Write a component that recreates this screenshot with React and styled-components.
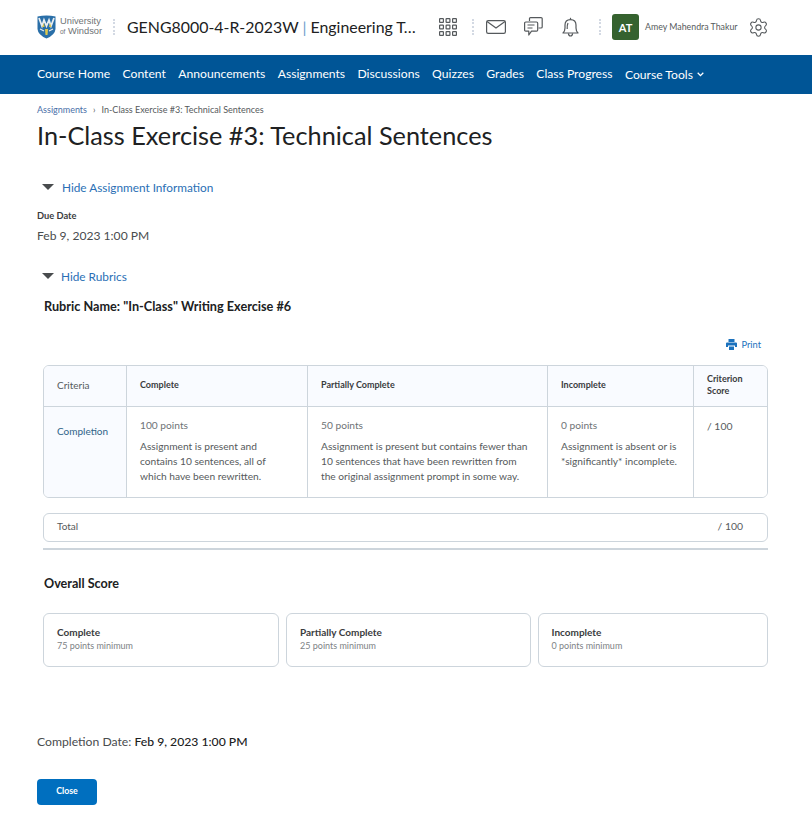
import React from 'react';
import styled, { createGlobalStyle } from 'styled-components';
import { Settings } from 'lucide-react';

const GlobalStyle = createGlobalStyle`
  html, body {
    margin: 0;
    padding: 0;
    background: #fff;
    font-family: Lato, "Open Sans", sans-serif;
    color: #202122;
  }
  * { box-sizing: border-box; }
`;

const Page = styled.div`
  width: 812px;
  height: 840px;
  overflow: hidden;
`;

const Header = styled.header`
  height: 55px;
  display: flex;
  align-items: center;
  padding: 0 0 1px 37px;
`;

const LogoText = styled.div`
  margin: 0 0 1px 4px;
  width: 40px;
  font-family: "Liberation Sans", sans-serif;
  font-size: 9.3px;
  line-height: 10px;
  color: #6e7376;
  text-align: right;
  white-space: nowrap;
`;

const LogoOf = styled.span`
  font-size: 6.5px;
`;

const Dots = styled.span`
  display: block;
  height: 16px;
  border-left: 2px dotted #d3d9e3;
  margin: ${(p) => p.$margin};
`;

const CourseTitle = styled.div`
  width: 295px;
  margin-bottom: 2px;
  font-size: 15.9px;
  color: #202122;
  white-space: nowrap;
  overflow: hidden;
  text-overflow: ellipsis;
`;

const Pipe = styled.span`
  color: #6d9ecb;
`;

const IconSlot = styled.span`
  display: flex;
  color: #55595c;
  margin: ${(p) => p.$margin || 0};
`;

const Avatar = styled.div`
  width: 27px;
  height: 26px;
  border-radius: 3px;
  background: #35622f;
  color: #fff;
  font-size: 11px;
  font-weight: 700;
  display: flex;
  align-items: center;
  justify-content: center;
`;

const UserName = styled.div`
  margin: 0 0 2px 6px;
  width: 98px;
  font-size: 8.8px;
  color: #565a5c;
  white-space: nowrap;
`;

const Nav = styled.nav`
  height: 39px;
  background: #005596;
  display: flex;
  align-items: center;
  gap: 12.4px;
  padding: 0 0 3px 37px;
  color: #fff;
  font-size: 12.15px;
`;

const NavItem = styled.span`
  white-space: nowrap;
`;

const NavMenu = styled(NavItem)`
  display: flex;
  align-items: center;
  gap: 4px;
  margin-top: 2px;
`;

const Main = styled.main`
  padding: 0 44px 0 37px;
`;

const Crumbs = styled.div`
  padding-top: 10px;
  height: 24px;
  display: flex;
  gap: 6px;
  font-size: 9px;
  line-height: 12px;
  color: #565a5c;
`;

const CrumbLink = styled.span`
  color: #4a6fa8;
`;

const Title = styled.h1`
  margin: 0;
  height: 39px;
  font-size: 25.3px;
  line-height: 34px;
  font-weight: 400;
  color: #202122;
`;

const Toggle = styled.div`
  display: flex;
  align-items: center;
  height: 16px;
  margin-top: ${(p) => p.$top}px;
  padding-left: 5px;
  gap: ${(p) => p.$gap}px;
  font-size: 11.8px;
  color: #2a6fb5;
`;

const Caret = styled.span`
  width: 0;
  height: 0;
  border-left: 6px solid transparent;
  border-right: 6px solid transparent;
  border-top: 6px solid #494c4e;
`;

const DueLabel = styled.div`
  margin-top: 15px;
  height: 12px;
  font-size: 9.3px;
  line-height: 12px;
  font-weight: 700;
  color: #3a3c3e;
`;

const DueValue = styled.div`
  margin-top: 6px;
  font-size: 12.1px;
  line-height: 16px;
  color: #494c4e;
`;

const RubricSection = styled.section`
  margin-left: 6px;
`;

const RubricName = styled.h2`
  margin: 14px 0 0 1px;
  font-size: 12.7px;
  line-height: 16px;
  font-weight: 700;
  color: #202122;
`;

const PrintRow = styled.div`
  margin-top: 22px;
  height: 16px;
  display: flex;
  justify-content: flex-end;
  align-items: center;
  gap: 4px;
  padding-right: 7px;
  font-size: 9.3px;
  color: #1c72bd;
`;

const Table = styled.div`
  margin-top: 13px;
  width: 725px;
  height: 133px;
  display: grid;
  grid-template-columns: 82px 181px 240px 146px 74px;
  grid-template-rows: 40px 91px;
  border: 1px solid #cdd5dc;
  border-radius: 6px;
  overflow: hidden;
`;

const Cell = styled.div`
  background: ${(p) => (p.$shaded ? '#f9fbff' : '#fff')};
  border-left: ${(p) => (p.$first ? 'none' : '1px solid #cdd5dc')};
  border-top: ${(p) => (p.$body ? '1px solid #cdd5dc' : 'none')};
  padding: ${(p) => (p.$body ? '0 0 0 13px' : '0 0 3px 13px')};
  display: flex;
  flex-direction: column;
  justify-content: ${(p) => (p.$body ? 'flex-start' : 'center')};
`;

const CriteriaText = styled.div`
  font-size: 10px;
  color: ${(p) => p.$color || '#565a5c'};
  margin-top: ${(p) => p.$top || 0}px;
`;

const LevelHead = styled.div`
  font-size: 9px;
  line-height: 12px;
  font-weight: 700;
  color: #3a3c3e;
`;

const Points = styled.div`
  margin-top: 12px;
  font-size: 10.2px;
  line-height: 12px;
  color: #6e7376;
`;

const Description = styled.div`
  margin-top: 8px;
  font-size: 10.2px;
  line-height: 15px;
  color: #565a5c;
  white-space: pre-line;
`;

const Score = styled.div`
  margin-top: 13px;
  font-size: 10.4px;
  line-height: 12px;
  color: #565a5c;
`;

const TotalBox = styled.div`
  margin-top: 15px;
  width: 725px;
  height: 29px;
  border: 1px solid #cdd5dc;
  border-radius: 6px;
  display: flex;
  align-items: center;
  justify-content: space-between;
  padding: 0 24px 3px 13px;
  font-size: 10px;
  color: #565a5c;
`;

const TotalScore = styled.span`
  font-size: 10.4px;
`;

const Rule = styled.div`
  margin-top: 6px;
  width: 725px;
  height: 2px;
  background: #cdd5dc;
`;

const ScoreHeading = styled.h3`
  margin: 26px 0 0 1px;
  font-size: 12.6px;
  line-height: 16px;
  font-weight: 700;
  color: #202122;
`;

const Levels = styled.div`
  margin-top: 21px;
  width: 725px;
  display: grid;
  grid-template-columns: 236px 244.5px 230.5px;
  column-gap: 7px;
`;

const LevelCard = styled.div`
  height: 54px;
  border: 1px solid #cdd5dc;
  border-radius: 6px;
  padding: 12px 13px 0;
`;

const LevelName = styled.div`
  font-size: 10px;
  line-height: 13px;
  font-weight: 700;
  color: #3a3c3e;
`;

const LevelMin = styled.div`
  font-size: 9px;
  line-height: 14px;
  color: #7d8285;
`;

const CompletionDate = styled.div`
  margin-top: 67px;
  font-size: 12.2px;
  line-height: 16px;
  color: #494c4e;
`;

const DateValue = styled.span`
  color: #202122;
  font-weight: 500;
`;

const CloseButton = styled.button`
  display: block;
  margin-top: 29px;
  width: 60px;
  height: 26px;
  border: none;
  border-radius: 4px;
  background: #006fbf;
  color: #fff;
  font-family: inherit;
  font-size: 8.8px;
  font-weight: 700;
  padding: 0 0 4px;
`;

const ShieldLogo = () => (
  <svg width="19" height="24" viewBox="0 0 19 24">
    <path d="M0.5 1.5 Q9.5 -0.5 18.5 1.5 V14 Q18 20 9.5 23.5 Q1 20 0.5 14 Z" fill="#2a6fa8" />
    <path d="M2 3 L5 11 L7 5 L9.5 11 L12 5 L14 11 L17 3" fill="none" stroke="#e8edf0" strokeWidth="1.8" />
    <path d="M5 12 L7 8 L7.5 12 Z M12 12 L13 8 L14.5 12 Z" fill="#e0c84a" />
    <path d="M8 14 L11 14 L10.5 20 L8.5 20 Z" fill="#e0c84a" />
    <path d="M3 14 L7 16 M16 14 L12 16" stroke="#e8edf0" strokeWidth="1.2" />
  </svg>
);

const GridIcon = () => (
  <svg width="18" height="18" viewBox="0 0 18 18" fill="none" stroke="#55595c" strokeWidth="1.2">
    {[0, 6.5, 13].map((y) =>
      [0, 6.5, 13].map((x) => <rect key={`${x}-${y}`} x={x + 0.6} y={y + 0.6} width="3.8" height="3.8" rx="0.5" />)
    )}
  </svg>
);

const MailIcon = () => (
  <svg width="20" height="14" viewBox="0 0 20 14" fill="none" stroke="#55595c" strokeWidth="1.2">
    <rect x="0.6" y="0.6" width="18.8" height="12.8" rx="1.6" />
    <path d="M1 1.5 L10 8 L19 1.5" />
  </svg>
);

const ChatIcon = () => (
  <svg width="19" height="20" viewBox="0 0 19 20" fill="none" stroke="#55595c" strokeWidth="1.2" strokeLinejoin="round">
    <path d="M5.5 4 V1.6 Q5.5 0.6 6.5 0.6 H17 Q18.2 0.6 18.2 1.6 V10 Q18.2 11 17 11 H14.5" />
    <path d="M1.8 5 H12.5 Q13.7 5 13.7 6.2 V13 Q13.7 14.2 12.5 14.2 H7.5 L4.8 18 V14.2 H1.8 Q0.6 14.2 0.6 13 V6.2 Q0.6 5 1.8 5 Z" />
    <path d="M3.5 8 H10.5 M3.5 11 H8.5" />
  </svg>
);

const BellIcon = () => (
  <svg width="17" height="20" viewBox="0 0 17 20" fill="none" stroke="#55595c" strokeWidth="1.2" strokeLinejoin="round">
    <path d="M8.5 0.8 V2.4" />
    <path d="M1 16 Q3 14 3 11 V8 Q3 2.6 8.5 2.6 Q14 2.6 14 8 V11 Q14 14 16 16 Z" />
    <path d="M6.4 16.4 Q6.6 19 8.5 19 Q10.4 19 10.6 16.4" />
    <path d="M6 6 Q5 8 5.2 12" />
  </svg>
);

const PrintIcon = () => (
  <svg width="11" height="11" viewBox="0 0 11 11" fill="#1c72bd">
    <path d="M2.5 0 H8.5 V3 H2.5 Z" />
    <path d="M1 3.5 H10 Q11 3.5 11 4.5 V8 H9 V6.5 H2 V8 H0 V4.5 Q0 3.5 1 3.5 Z" />
    <path d="M3 7.5 H8 V11 H3 Z" />
  </svg>
);

const ChevronDown = () => (
  <svg width="7" height="5" viewBox="0 0 7 5" fill="none" stroke="#fff" strokeWidth="1.3">
    <path d="M0.7 0.8 L3.5 3.6 L6.3 0.8" />
  </svg>
);

const navItems = ['Course Home', 'Content', 'Announcements', 'Assignments', 'Discussions', 'Quizzes', 'Grades', 'Class Progress'];

const levels = [
  {
    name: 'Complete',
    points: '100 points',
    description: 'Assignment is present and\ncontains 10 sentences, all of\nwhich have been rewritten.',
  },
  {
    name: 'Partially Complete',
    points: '50 points',
    description: 'Assignment is present but contains fewer than\n10 sentences that have been rewritten from\nthe original assignment prompt in some way.',
  },
  {
    name: 'Incomplete',
    points: '0 points',
    description: 'Assignment is absent or is\n*significantly* incomplete.',
  },
];

const overall = [
  { name: 'Complete', min: '75 points minimum' },
  { name: 'Partially Complete', min: '25 points minimum' },
  { name: 'Incomplete', min: '0 points minimum' },
];

const App = () => (
  <Page>
    <GlobalStyle />
    <Header>
      <ShieldLogo />
      <LogoText>
        University
        <br />
        <LogoOf>of</LogoOf> Windsor
      </LogoText>
      <Dots $margin="0 12px 0 13px" />
      <CourseTitle>
        GENG8000-4-R-2023W <Pipe>|</Pipe> Engineering Technical Communication
      </CourseTitle>
      <IconSlot $margin="0 0 0 17px">
        <GridIcon />
      </IconSlot>
      <Dots $margin="0 12px 0 15px" />
      <MailIcon />
      <IconSlot $margin="0 0 0 18px">
        <ChatIcon />
      </IconSlot>
      <IconSlot $margin="0 0 0 19px">
        <BellIcon />
      </IconSlot>
      <Dots $margin="0 11px 0 20px" />
      <Avatar>AT</Avatar>
      <UserName>Amey Mahendra Thakur</UserName>
      <IconSlot $margin="0 0 0 5px">
        <Settings size={21} strokeWidth={1.2} />
      </IconSlot>
    </Header>
    <Nav>
      {navItems.map((item) => (
        <NavItem key={item}>{item}</NavItem>
      ))}
      <NavMenu>
        Course Tools <ChevronDown />
      </NavMenu>
    </Nav>
    <Main>
      <Crumbs>
        <CrumbLink>Assignments</CrumbLink>
        <span>›</span>
        <span>In-Class Exercise #3: Technical Sentences</span>
      </Crumbs>
      <Title>In-Class Exercise #3: Technical Sentences</Title>
      <Toggle $top={22} $gap={8}>
        <Caret />
        Hide Assignment Information
      </Toggle>
      <DueLabel>Due Date</DueLabel>
      <DueValue>Feb 9, 2023 1:00 PM</DueValue>
      <Toggle $top={24} $gap={7}>
        <Caret />
        Hide Rubrics
      </Toggle>
      <RubricSection>
        <RubricName>Rubric Name: "In-Class" Writing Exercise #6</RubricName>
        <PrintRow>
          <PrintIcon />
          Print
        </PrintRow>
        <Table>
          <Cell $first $shaded>
            <CriteriaText>Criteria</CriteriaText>
          </Cell>
          {levels.map((level) => (
            <Cell key={level.name} $shaded>
              <LevelHead>{level.name}</LevelHead>
            </Cell>
          ))}
          <Cell $shaded>
            <LevelHead>
              Criterion
              <br />
              Score
            </LevelHead>
          </Cell>
          <Cell $first $shaded $body>
            <CriteriaText $top={18} $color="#2f6488">Completion</CriteriaText>
          </Cell>
          {levels.map((level) => (
            <Cell key={level.name} $body>
              <Points>{level.points}</Points>
              <Description>{level.description}</Description>
            </Cell>
          ))}
          <Cell $body>
            <Score>/ 100</Score>
          </Cell>
        </Table>
        <TotalBox>
          <span>Total</span>
          <TotalScore>/ 100</TotalScore>
        </TotalBox>
        <Rule />
        <ScoreHeading>Overall Score</ScoreHeading>
        <Levels>
          {overall.map((level) => (
            <LevelCard key={level.name}>
              <LevelName>{level.name}</LevelName>
              <LevelMin>{level.min}</LevelMin>
            </LevelCard>
          ))}
        </Levels>
      </RubricSection>
      <CompletionDate>
        Completion Date: <DateValue>Feb 9, 2023 1:00 PM</DateValue>
      </CompletionDate>
      <CloseButton>Close</CloseButton>
    </Main>
  </Page>
);

export default App;
